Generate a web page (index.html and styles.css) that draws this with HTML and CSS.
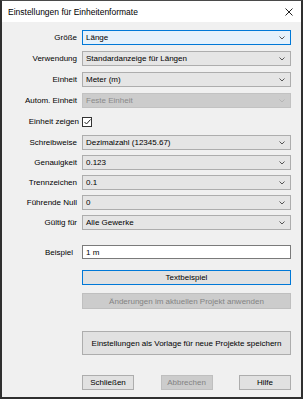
FILE: index.html
```html
<!DOCTYPE html>
<html lang="de">
<head>
    <meta charset="UTF-8">
    <title>Einstellungen für Einheitenformate</title>
    <link rel="stylesheet" href="styles.css">
</head>
<body>
<div class="window">
    <div class="titlebar">
        <span class="title">Einstellungen für Einheitenformate</span>
        <svg class="close" width="8" height="8" viewBox="0 0 8 8"><path d="M0.5 0.5 L7.5 7.5 M7.5 0.5 L0.5 7.5" stroke="#222" stroke-width="1" fill="none"/></svg>
    </div>
    <div class="content">
        <div class="row up">
            <label>Größe</label>
            <div class="combo focus">Länge<svg class="chev" width="6" height="4" viewBox="0 0 6 4"><path d="M0.5 0.5 L3 3 L5.5 0.5" stroke="#555" fill="none"/></svg></div>
        </div>
        <div class="row up">
            <label>Verwendung</label>
            <div class="combo">Standardanzeige für Längen<svg class="chev" width="6" height="4" viewBox="0 0 6 4"><path d="M0.5 0.5 L3 3 L5.5 0.5" stroke="#555" fill="none"/></svg></div>
        </div>
        <div class="row up">
            <label>Einheit</label>
            <div class="combo">Meter (m)<svg class="chev" width="6" height="4" viewBox="0 0 6 4"><path d="M0.5 0.5 L3 3 L5.5 0.5" stroke="#555" fill="none"/></svg></div>
        </div>
        <div class="row up">
            <label>Autom. Einheit</label>
            <div class="combo off">Feste Einheit<svg class="chev" width="6" height="4" viewBox="0 0 6 4"><path d="M0.5 0.5 L3 3 L5.5 0.5" stroke="#b5b5b5" fill="none"/></svg></div>
        </div>
        <div class="row check">
            <label>Einheit zeigen</label>
            <span class="box"><svg width="7" height="6" viewBox="0 0 7 6"><path d="M0.5 3 L2.5 5 L6.5 0.5" stroke="#222" fill="none"/></svg></span>
        </div>
        <div class="row">
            <label>Schreibweise</label>
            <div class="combo">Dezimalzahl (12345.67)<svg class="chev" width="6" height="4" viewBox="0 0 6 4"><path d="M0.5 0.5 L3 3 L5.5 0.5" stroke="#555" fill="none"/></svg></div>
        </div>
        <div class="row">
            <label>Genauigkeit</label>
            <div class="combo">0.123<svg class="chev" width="6" height="4" viewBox="0 0 6 4"><path d="M0.5 0.5 L3 3 L5.5 0.5" stroke="#555" fill="none"/></svg></div>
        </div>
        <div class="row">
            <label>Trennzeichen</label>
            <div class="combo">0.1<svg class="chev" width="6" height="4" viewBox="0 0 6 4"><path d="M0.5 0.5 L3 3 L5.5 0.5" stroke="#555" fill="none"/></svg></div>
        </div>
        <div class="row">
            <label>Führende Null</label>
            <div class="combo">0<svg class="chev" width="6" height="4" viewBox="0 0 6 4"><path d="M0.5 0.5 L3 3 L5.5 0.5" stroke="#555" fill="none"/></svg></div>
        </div>
        <div class="row">
            <label>Gültig für</label>
            <div class="combo">Alle Gewerke<svg class="chev" width="6" height="4" viewBox="0 0 6 4"><path d="M0.5 0.5 L3 3 L5.5 0.5" stroke="#555" fill="none"/></svg></div>
        </div>

        <div class="row sample">
            <label>Beispiel</label>
            <div class="textbox">1 m</div>
        </div>

        <div class="buttons">
            <div class="btn default">Textbeispiel</div>
            <div class="btn off apply">Änderungen im aktuellen Projekt anwenden</div>
            <div class="btn big">Einstellungen als Vorlage für neue Projekte speichern</div>
            <div class="bottom">
                <div class="btn small">Schließen</div>
                <div class="btn small off">Abbrechen</div>
                <div class="btn small">Hilfe</div>
            </div>
        </div>
    </div>
</div>
</body>
</html>
```

FILE: styles.css
```css
* { margin: 0; padding: 0; box-sizing: border-box; }
html, body { width: 303px; height: 399px; overflow: hidden; }
body {
    background: #f0f0f0;
    color: #000;
    font-family: "Liberation Sans", Arial, sans-serif;
    font-size: 8px;
}

.window {
    width: 303px;
    height: 399px;
    border-top: 1px solid #4a4a4a;
    border-left: 2px solid #2f2f2f;
    border-right: 2px solid #2f2f2f;
    border-bottom: 2px solid #2f2f2f;
    background: #f0f0f0;
    display: flex;
    flex-direction: column;
}

.titlebar {
    height: 21px;
    background: #fff;
    display: flex;
    align-items: center;
    justify-content: space-between;
    padding: 0 8px 0 6px;
    flex-shrink: 0;
}
.title {
    font-size: 8.5px;
    color: #000;
}

.content {
    display: flex;
    flex-direction: column;
    padding: 8px 10px 0 0;
}

.row {
    display: flex;
    align-items: center;
    height: 15px;
    margin-bottom: 5px;
}
.row.up { margin-bottom: 6px; }
.row.check { margin-bottom: 6px; }
.row label {
    width: 75px;
    margin-right: 5px;
    text-align: right;
    color: #000;
    white-space: nowrap;
}

.combo {
    flex: 1;
    height: 15px;
    display: flex;
    align-items: center;
    justify-content: space-between;
    padding: 0 5px 0 3px;
    background: #e5e5e5;
    border: 1px solid #adadad;
    white-space: nowrap;
}
.combo.focus {
    background: #e5f1fb;
    border-color: #0078d7;
}
.combo.off {
    background: #cccccc;
    border-color: #c2c2c2;
    color: #8a8a8a;
}

.row.check label { width: 77px; margin-right: 3px; }
.box {
    width: 10px;
    height: 10px;
    border: 1px solid #333;
    background: #fff;
    display: flex;
    align-items: center;
    justify-content: center;
}

.row.sample { margin-top: 10px; height: 14px; }
.row.sample label { width: 71px; margin-right: 9px; }
.textbox {
    flex: 1;
    height: 14px;
    background: #fff;
    border: 1px solid #7a7a7a;
    padding: 0 3px;
    display: flex;
    align-items: center;
}

.buttons {
    margin-left: 80px;
    margin-top: 6px;
    display: flex;
    flex-direction: column;
}
.btn {
    height: 15px;
    background: #e1e1e1;
    border: 1px solid #adadad;
    display: flex;
    align-items: center;
    justify-content: center;
    white-space: nowrap;
}
.btn.default { border-color: #0078d7; }
.btn.off {
    background: #cccccc;
    border-color: #bfbfbf;
    color: #838383;
}
.btn.apply { margin-top: 8px; height: 16px; }
.btn.big { margin-top: 22px; height: 24px; }

.bottom {
    margin-top: 20px;
    display: flex;
    justify-content: space-between;
}
.btn.small { width: 52px; }
```
